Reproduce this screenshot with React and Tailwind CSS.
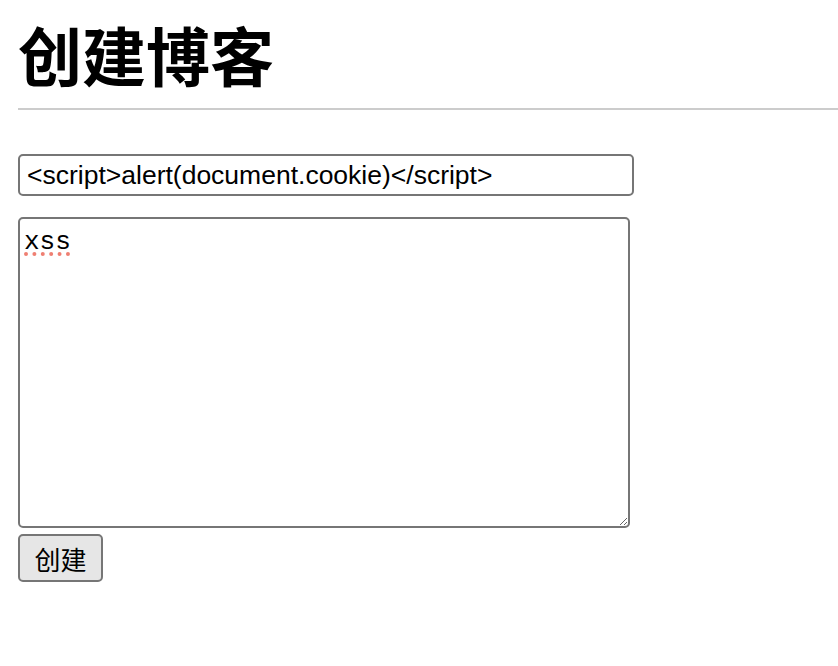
export default function App() {
  return (
    <div className="min-h-screen bg-white pl-[18px] text-black">
      <h1 className="pt-[21px] text-[64px] leading-[64px] font-bold [font-family:'Noto_Sans_CJK_SC',sans-serif]">
        创建博客
      </h1>
      <hr className="mt-[23px] border-t-2 border-[#cccccc]" />
      <form className="flex flex-col items-start pt-[44px]" onSubmit={(e) => e.preventDefault()}>
        <input
          type="text"
          defaultValue="<script>alert(document.cookie)</script>"
          className="h-[42px] w-[616px] rounded-[5px] border-2 border-[#767676] bg-white px-[7px] text-[26.5px] text-black outline-none [font-family:'Liberation_Sans',Arial,sans-serif]"
        />
        <textarea
          defaultValue="xss"
          className="mt-[21px] h-[311px] w-[612px] rounded-[5px] border-2 border-[#767676] bg-white p-[4px] text-[26px] text-black underline decoration-[#ef7f72] decoration-dotted decoration-4 underline-offset-[3px] outline-none [font-family:'Liberation_Mono','Courier_New',monospace]"
        />
        <button
          type="submit"
          className="mt-[6px] h-[48px] w-[85px] rounded-[5px] border-2 border-[#767676] bg-[#e6e6e6] text-[26px] text-black [font-family:'Noto_Sans_CJK_SC',sans-serif]"
        >
          创建
        </button>
      </form>
    </div>
  );
}
